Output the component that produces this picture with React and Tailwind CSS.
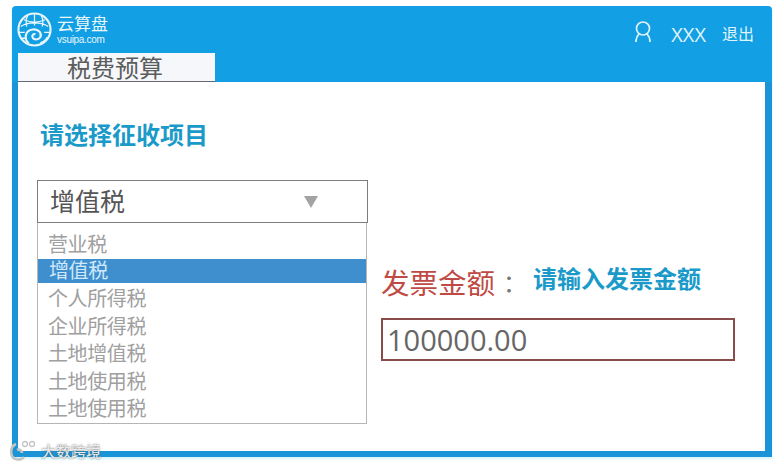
import React from "react";

const cjk = "font-['Open_Sans','Noto_Sans_CJK_SC',sans-serif]";

const options = ["营业税", "增值税", "个人所得税", "企业所得税", "土地增值税", "土地使用税", "土地使用税"];

const Logo = () => (
  <svg width="35" height="35" viewBox="0 0 36 36" fill="none" stroke="#e8f6fc" strokeWidth="1.6">
    <circle cx="18" cy="18" r="16.5" strokeWidth="2.2" />
    <path d="M4 15c6-5 22-5 28 0M7 8c7 3 15 3 22 0M18 2v12M11 4c-2 3-2 7-1 11M25 4c2 3 2 7 1 11" strokeWidth="1.3" />
    <path d="M2 21h6M28 21h6M5 27h5" strokeWidth="1.3" />
    <path d="M12 32c-5-4-4-13 4-14 6-1 10 4 8 8-2 3-7 3-8 0-1-2 1-4 3-3" strokeWidth="2.2" />
    <path d="M24 32c3-1 6-3 7-6" strokeWidth="1.8" />
  </svg>
);

const Header = () => (
  <div className="flex h-[47px] items-start justify-between">
    <div className="-ml-px flex items-center gap-[5px] pt-[6px]">
      <Logo />
      <div className="flex flex-col gap-[1px] text-[#e8f6fc]">
        <span className={`${cjk} text-[17px] leading-[18px]`}>云算盘</span>
        <span className="font-['Liberation_Sans',sans-serif] text-[10px] leading-[11px] tracking-[-0.3px]">vsuipa.com</span>
      </div>
    </div>
    <div className="flex items-center pt-[13px] pr-[11px] text-[#dff3fb]">
      <svg width="20" height="26" viewBox="0 0 20 26" fill="none" stroke="currentColor" strokeWidth="1.7">
        <circle cx="10" cy="8.5" r="6.5" />
        <path d="M6 14c-2 2-3 5-3 8M14 14c2 2 3 5 3 8" />
      </svg>
      <span className={`${cjk} ml-[18px] text-[20px] leading-6 pt-[4px]`}>XXX</span>
      <span className={`${cjk} ml-[16px] text-[16px] leading-6 pt-[1px]`}>退出</span>
    </div>
  </div>
);

const Dropdown = () => (
  <div className={`${cjk} w-[331px]`}>
    <div className="flex h-[43px] items-center justify-between border border-[#7d7d7d] bg-white pr-[49px] pl-[12px] text-[25px] text-[#555555]">
      <span>增值税</span>
      <span className="h-0 w-0 border-x-[7px] border-t-[12px] border-x-transparent border-t-[#a3a3a3]"></span>
    </div>
    <ul className="w-[330px] border border-t-0 border-[#b5b5b5] pt-[8px] pb-[1px] text-[20px] leading-[27.4px] tracking-[-0.4px] text-[#a0a0a0]">
      {options.map((name, index) =>
        index === 1 ? (
          <li key={index} className="mt-[1px] mb-[2px] h-[24px] bg-[#3f8fce] pl-[11px] leading-[24px] text-[#cfe8fb]">
            {name}
          </li>
        ) : (
          <li key={index} className="pl-[10px]">
            {name}
          </li>
        )
      )}
    </ul>
  </div>
);

const AmountForm = () => (
  <div className={`${cjk} w-[354px] pt-[83px]`}>
    <div className="flex h-[40px] items-center">
      <span className="text-[28.5px] text-[#bf4a45]">发票金额</span>
      <span className="ml-[8px] w-[30px] text-[24px] text-[#777777]">：</span>
      <span className="-mt-[9px] text-[24px] font-bold text-[#1b9ac9]">请输入发票金额</span>
    </div>
    <div className="mt-[15px] flex h-[43px] items-center border-2 border-[#8a4b4b] pl-[4px] text-[29px] text-[#666666]">
      100000.00
    </div>
  </div>
);

export default function App() {
  return (
    <div className="relative h-[467px] w-[779px] overflow-hidden bg-white pt-[6px] pl-[12px]">
      <div className="flex h-[451px] w-[760px] flex-col overflow-hidden rounded-t-[4px] shadow-[0_2px_3px_#d5f3fb]">
        <div className="bg-[#129fe3] pr-[7px] pl-[6px]">
          <Header />
          <div className="h-[29px] w-[197px] border-b border-[#666a70] bg-[#f5f7fa] pr-[3px] text-center">
            <span className={`${cjk} block text-[24px] leading-[29px] text-[#5c5c5c]`}>税费预算</span>
          </div>
        </div>
        <div className="flex-1 border-x-[6px] border-r-[7px] border-b-[6px] border-[#1a94d6] bg-white pt-[35px] pl-[19px]">
          <h1 className={`${cjk} pl-[3px] text-[24px] leading-[35px] font-bold text-[#1b9ac9]`}>请选择征收项目</h1>
          <div className="mt-[28px] flex gap-[13px]">
            <Dropdown />
            <AmountForm />
          </div>
        </div>
      </div>
      <div className="absolute bottom-[4px] left-[8px] flex items-center gap-[5px] text-[#ededed] [text-shadow:0_0_2px_#555]">
        <svg width="28" height="24" viewBox="0 0 28 24" fill="none" stroke="#c4c4c4" strokeWidth="2.6">
          <path d="M8 5c-5 2-6 8-4 12 2 4 9 5 12 1" />
          <path d="M9 11c2-1 5 0 5 3" />
          <circle cx="17" cy="5" r="2.5" strokeWidth="1.3" />
          <circle cx="24" cy="5" r="2.5" strokeWidth="1.3" />
        </svg>
        <span className={`${cjk} text-[15px] leading-5`}>大数跨境</span>
      </div>
    </div>
  );
}
